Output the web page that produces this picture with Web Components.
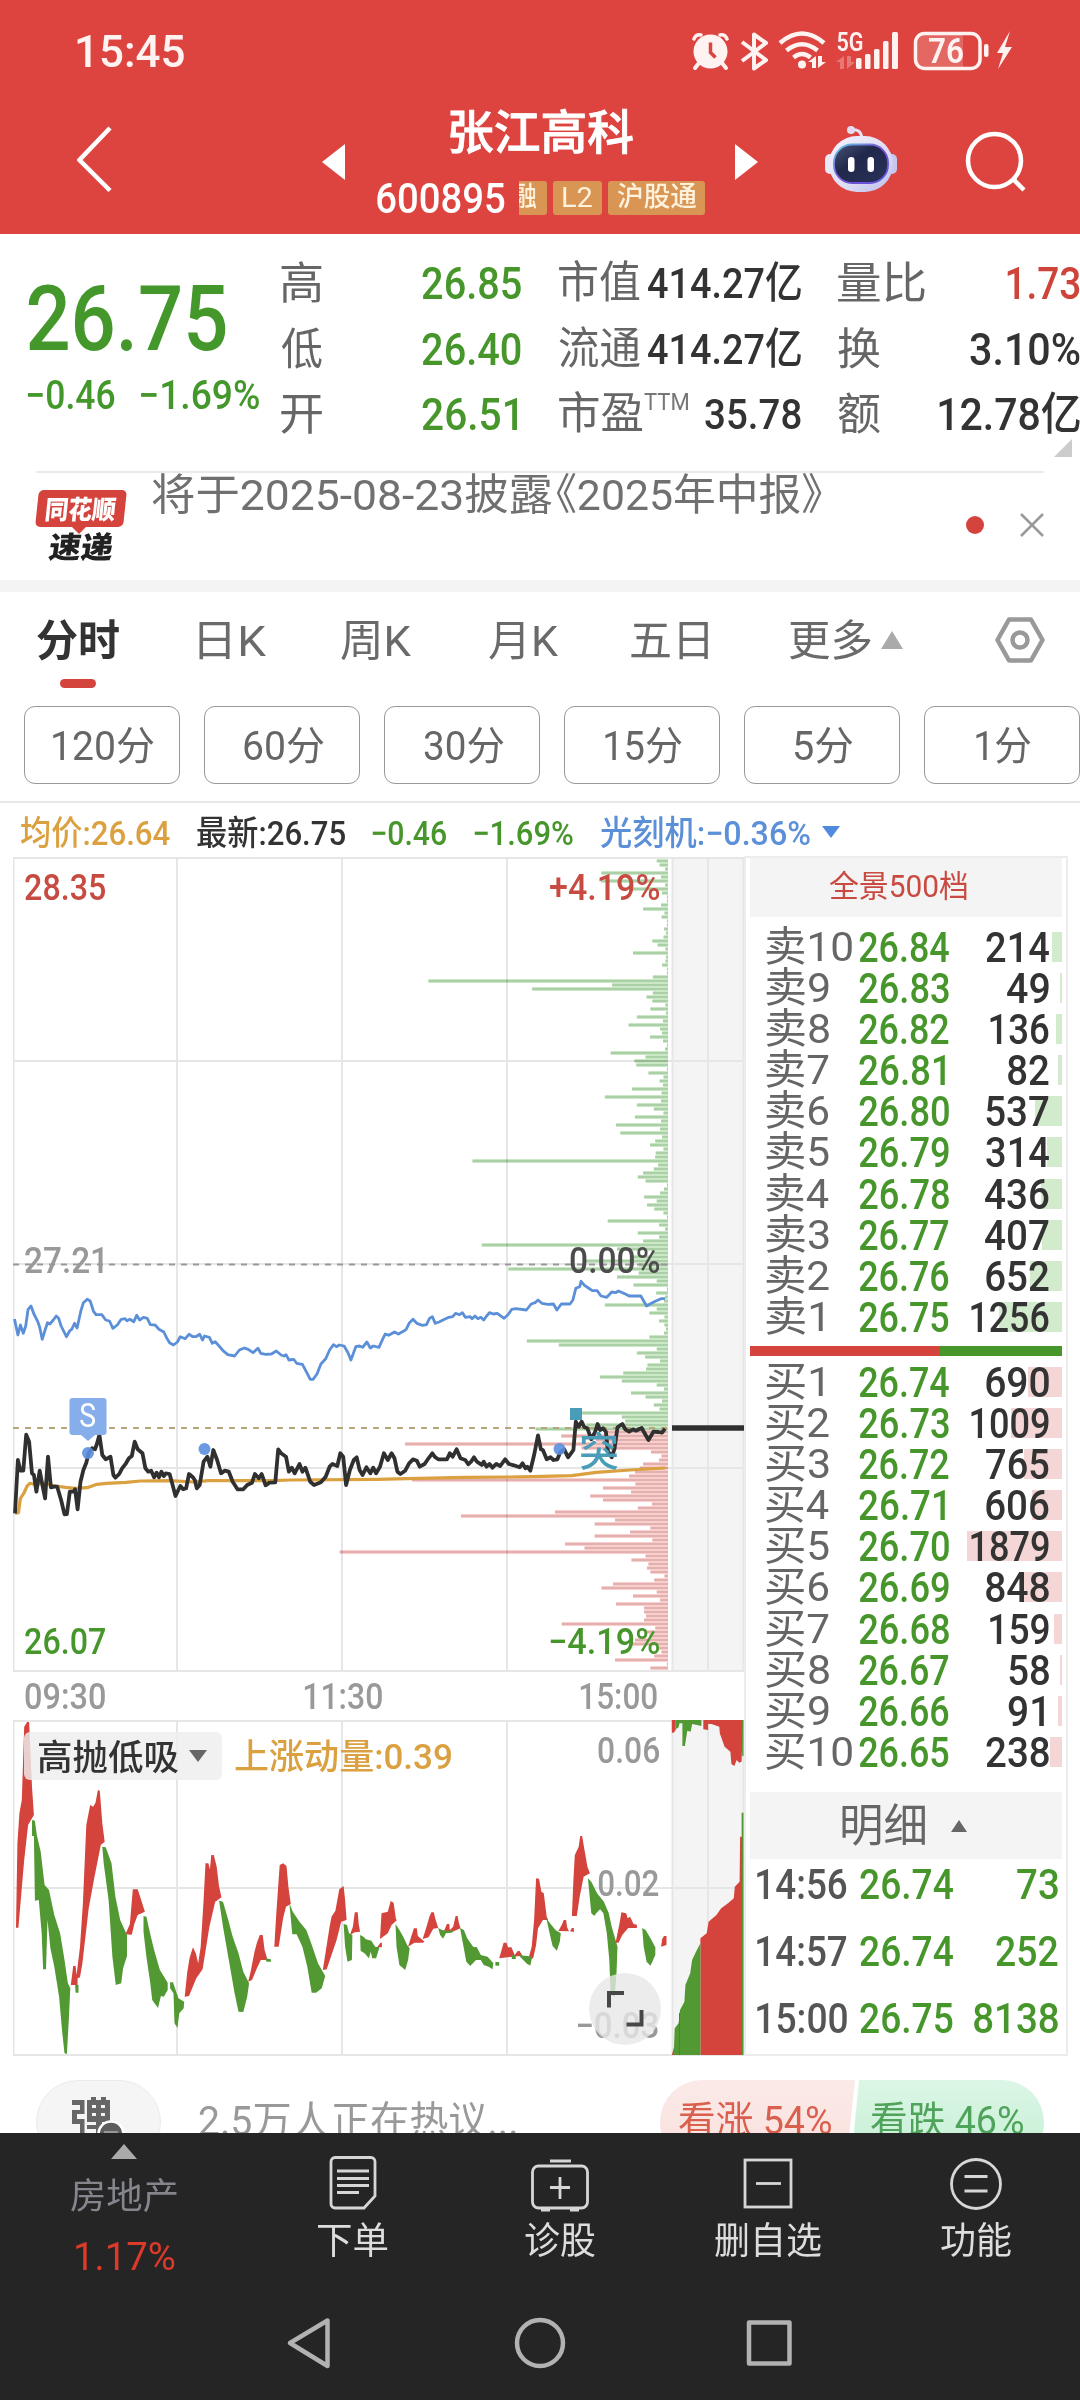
<!DOCTYPE html>
<html lang="zh-CN">
<head>
<meta charset="utf-8">
<title>张江高科 600895</title>
<style>
:root {
    --brand: #dd4440;
    --up: #d4443c;
    --down: #47962b;
    --text: #333;
    --muted: #666;
    --faint: #999;
    --gold: #dba040;
    --blue: #5b8fd8;
    --line: #e8e8e8;
    --panel: #f4f4f4;
}
body {
    margin: 0;
    width: 1080px;
    height: 2400px;
    overflow: hidden;
    background: #fff;
    color: var(--text);
    font-family: Roboto, "Noto Sans CJK SC", sans-serif;
}
</style>
</head>
<body>
<stock-app></stock-app>

<script>
const FONT = 'Roboto, "Noto Sans CJK SC", sans-serif';
const measure = document.createElement('canvas').getContext('2d');

class Component extends HTMLElement {
    constructor() {
        super();
        this.attachShadow({mode: 'open'});
    }
    connectedCallback() {
        this.shadowRoot.innerHTML = `<style>:host{display:block;box-sizing:border-box}${this.css()}</style>${this.render()}`;
        this.onMount();
    }
    css() { return '' }
    render() { return '' }
    onMount() {}
}

// one line of text squeezed so that its ink is exactly `w` wide
class FitText extends Component {
    css() {
        return `
        :host { flex: none; line-height: 1; }
        span { display: block; width: max-content; white-space: pre; transform-origin: 0 0; }`;
    }
    render() { return '<span><slot></slot></span>' }
    onMount() {
        const w = +this.getAttribute('w');
        const size = +this.getAttribute('s');
        const weight = this.getAttribute('b') || 400;
        this.style.width = w + 'px';
        this.style.height = size + 'px';
        this.style.fontSize = size + 'px';
        this.style.fontWeight = weight;
        measure.font = `${weight} ${size}px ${FONT}`;
        const m = measure.measureText(this.textContent);
        const k = w / (m.actualBoundingBoxLeft + m.actualBoundingBoxRight);
        this.shadowRoot.querySelector('span').style.transform =
            `translateX(${m.actualBoundingBoxLeft * k}px) scaleX(${k})`;
    }
}
customElements.define('fit-text', FitText);

const fit = (text, w, s, b = 400, style = '') =>
    `<fit-text w="${w}" s="${s}" b="${b}" style="${style}">${text}</fit-text>`;

class StatusBar extends Component {
    css() {
        return `
        :host { display: flex; justify-content: space-between; height: 80px; padding: 29px 68px 0 77px; color: #fff3f2; }`;
    }
    render() {
        return `${fit('15:45', 107, 45, 500)}
        <svg width="320" height="42" viewBox="692 29 320 42" fill="none" stroke="#fff3f2">
            <g stroke-width="3.5" stroke-linecap="round">
                <path d="M694 39Q696 34 701 35M720 35Q725 34 727 39"/>
                <path d="M699 63l-4 5M722 63l4 5" stroke-width="4"/>
            </g>
            <circle cx="710.500" cy="51.500" r="17" fill="#fff3f2" stroke="none"/>
            <path d="M710.500 42.500v10l5 5" stroke="#dd4440" stroke-width="3.500"/>
            <path d="M742 42l24 18-12 8.500V34.500L766 43l-24 18" stroke-width="4" stroke-linejoin="round"/>
            <g stroke-width="4.500">
                <path d="M780 43Q802 24 824 43"/>
                <path d="M786.500 50.500Q802 38 817.500 50.500"/>
                <path d="M793.500 57.500Q802 50.500 810.500 57.500"/>
            </g>
            <g fill="#fff3f2" stroke="none">
                <circle cx="802" cy="64.500" r="4"/>
                <path d="M808 62l8-6v12h-4v-6zM818 56h4v6h4l-8 6z"/>
                <rect x="856" y="58" width="5.500" height="11" rx="1.500"/>
                <rect x="865" y="54" width="5.500" height="15" rx="1.500"/>
                <rect x="874" y="49" width="5.500" height="20" rx="1.500"/>
                <rect x="883" y="41" width="5.500" height="28" rx="1.500"/>
                <rect x="892" y="32" width="6" height="37" rx="1.500"/>
                <path opacity=".3" d="M836 62l8-6v13h-4v-7zM847 56h4v6h4l-8 7z"/>
                <path d="M1010 31l-13 22h6l-5 16 14-22h-7z"/>
                <rect x="984" y="44" width="4.500" height="13" rx="2"/>
                <path d="M917 35h46v32h-46z" opacity=".2"/>
                <text x="836.500" y="50.500" font-size="25.500" font-weight="600" textLength="27" lengthAdjust="spacingAndGlyphs">5G</text>
                <text x="928" y="63" font-size="35" font-weight="600" textLength="36" lengthAdjust="spacingAndGlyphs">76</text>
            </g>
            <rect x="915.500" y="33.500" width="64.500" height="35" rx="9" stroke-width="3.500"/>
        </svg>`;
    }
}
customElements.define('status-bar', StatusBar);

class TitleBar extends Component {
    css() {
        return `
        :host { display: flex; align-items: flex-start; height: 154px; color: #fff; }
        svg { flex: none; }
        .mid { width: 328px; margin: 29px 30px 0 32px; display: flex; flex-direction: column; align-items: center; }
        .name { -webkit-text-stroke: .8px #fff; }
        .code { display: flex; margin-top: 22px; align-self: stretch; }
        .tag { box-sizing: border-box; height: 34px; margin-top: 3px; padding-top: 3px; background: #d99554; color: #fff2dc; border-radius: 3px; display: flex; justify-content: center; overflow: hidden; }`;
    }
    render() {
        return `
        <svg style="margin:45px 0 0 77px" width="38" height="68" viewBox="77 125 38 68"><path d="M110 128L79.500 160 110 190.500" fill="none" stroke="#fff" stroke-width="4.500"/></svg>
        <svg style="margin:64px 0 0 207px" width="23" height="36"><path d="M23 0v36L0 18z" fill="#fff"/></svg>
        <div class="mid">
            <div class="name">${fit('张江高科', 183, 47, 500)}</div>
            <div class="code">
                ${fit('600895', 128, 42, 500)}
                <div class="tag" style="width:28px;margin-left:14px;border-radius:0 3px 3px 0;justify-content:flex-end">${fit('融', 25, 27, 500, 'margin-right:10px')}</div>
                <div class="tag" style="width:49px;margin-left:6px">${fit('L2', 29, 28)}</div>
                <div class="tag" style="width:97px;margin-left:6px">${fit('沪股通', 80, 27, 500)}</div>
            </div>
        </div>
        <svg style="margin-top:64px" width="23" height="36"><path d="M0 0v36l23-18z" fill="#fff"/></svg>
        <svg style="margin:44px 0 0 65px" width="76" height="70" viewBox="823 124 76 70">
            <defs>
                <linearGradient id="head" x1="0" y1="0" x2="1" y2="1"><stop offset="0" stop-color="#f6f3fd"/><stop offset=".6" stop-color="#dcdcf4"/><stop offset="1" stop-color="#b9bbea"/></linearGradient>
                <linearGradient id="rim" x1="0" y1="0" x2="1" y2="1"><stop offset="0" stop-color="#63cfe4"/><stop offset=".5" stop-color="#7a4fd6"/><stop offset="1" stop-color="#5a55d8"/></linearGradient>
                <linearGradient id="face" x1="0" y1="0" x2="1" y2="1"><stop offset="0" stop-color="#4a5276"/><stop offset=".4" stop-color="#20284c"/><stop offset="1" stop-color="#2a3157"/></linearGradient>
            </defs>
            <path d="M851 130q10-2 11 9" fill="none" stroke="#e9e2f4" stroke-width="3"/>
            <circle cx="851" cy="130" r="4" fill="#e4dcf2"/>
            <rect x="825" y="154" width="10" height="20" rx="5" fill="#e9e8f8"/>
            <rect x="887" y="154" width="10" height="20" rx="5" fill="#c6c7ee"/>
            <rect x="829" y="136" width="64" height="56" rx="28" fill="url(#head)"/>
            <rect x="834" y="144.500" width="54" height="38.500" rx="18" fill="url(#face)" stroke="url(#rim)" stroke-width="1.800"/>
            <rect x="848" y="157" width="6.500" height="15" rx="3.200" fill="#fff"/>
            <rect x="867.500" y="157" width="6.500" height="15" rx="3.200" fill="#fff"/>
        </svg>
        <svg style="margin:50px 0 0 65px" width="64" height="64" viewBox="964 130 64 64" fill="none" stroke="#fff" stroke-width="4.500">
            <circle cx="994.500" cy="160.500" r="26.500"/><path d="M1013 179l11 11"/>
        </svg>`;
    }
}
customElements.define('title-bar', TitleBar);

class QuotePanel extends Component {
    css() {
        return `
        :host { position: relative; height: 238px; }
        .wrap { display: flex; align-items: flex-start; padding-left: 28px; height: 237px; }
        .now { width: 232px; padding-top: 40px; color: #44982b; }
        .chg { display: flex; gap: 26px; margin-top: 11px; }
        .col { width: 242px; padding-top: 27px; }
        .row { display: flex; justify-content: space-between; align-items: baseline; height: 65.500px; }
        .row > :first-child { color: var(--muted); }
        .corner { position: absolute; right: 8px; top: 205px; }
        hr { border: 0; margin: 0 36px; height: 2px; background: #eaeaea; }`;
    }
    row(label, lw, value, vw, style = '', size = 45, extra = '') {
        return `<div class="row">${fit(label, lw, 44)}${extra}${fit(value, vw, size, 500, style)}</div>`;
    }
    render() {
        const green = 'color:#47962b';
        const tm = fit('TTM', 44, 24, 400, 'align-self:flex-start;color:#777;margin:-2px 16px 0 0');
        return `
        <div class="wrap">
            <div class="now">
                ${fit('26.75', 198, 91, 500)}
                <div class="chg">${fit('−0.46', 87, 40, 500)}${fit('−1.69%', 118, 40, 500)}</div>
            </div>
            <div class="col" style="width:240px;margin-left:21px">
                ${this.row('高', 41, '26.85', 99, green)}
                ${this.row('低', 41, '26.40', 99, green)}
                ${this.row('开', 41, '26.51', 95, green + ';margin-right:4px')}
            </div>
            <div class="col" style="margin-left:38px">
                ${this.row('市值', 81, '414.27亿', 153, '', 43)}
                ${this.row('流通', 81, '414.27亿', 153, '', 43)}
                ${this.row('市盈', 84, '35.78', 96, '', 43, tm)}
            </div>
            <div class="col" style="margin-left:37px">
                ${this.row('量比', 87, '1.73', 73, 'color:#ce4438')}
                ${this.row('换', 42, '3.10%', 110)}
                ${this.row('额', 42, '12.78亿', 141)}
            </div>
        </div>
        <svg class="corner" width="18" height="18"><path d="M18 0v18H0z" fill="#ccc"/></svg>
        <hr>`;
    }
}
customElements.define('quote-panel', QuotePanel);

class NewsLine extends Component {
    css() {
        return `
        :host { display: flex; align-items: flex-start; height: 120px; border-bottom: 12px solid var(--panel); padding-left: 36px; color: #707070; }
        .logo { width: 90px; margin-top: 18px; display: flex; flex-direction: column; align-items: center; }
        .red { width: 88px; height: 37px; background: var(--up); border-radius: 5px; transform: skewX(-6deg); color: #fff; display: flex; justify-content: center; }
        .tip { border: 7px solid transparent; border-top-color: var(--up); border-bottom: 0; margin-left: -4px; }
        .sub { transform: skewX(-8deg); color: #222; }`;
    }
    render() {
        return `
        <div class="logo">
            <div class="red">${fit('同花顺', 70, 26, 900, 'margin-top:7px')}</div>
            <div class="tip"></div>
            <div class="sub">${fit('速递', 64, 30, 900, 'margin-top:-1px')}</div>
        </div>
        ${fit('将于2025-08-23披露', 400, 43, 400, 'margin:2px 0 0 26px')}
        ${fit('《2025年中报》', 266, 43, 400, 'margin:2px 0 0 4px')}
        <svg style="margin:40px 0 0 144px" width="80" height="26" viewBox="966 513 80 26">
            <circle cx="975" cy="526" r="9" fill="#d4443c"/>
            <path d="M1021 515l22 22m0-22l-22 22" stroke="#999" stroke-width="2.500"/>
        </svg>`;
    }
}
customElements.define('news-line', NewsLine);

class PeriodTabs extends Component {
    css() {
        return `
        :host { height: 211px; border-bottom: 2px solid var(--line); }
        .tabs { display: flex; align-items: flex-start; height: 114px; color: #6a6a6a; }
        .tab { display: flex; flex-direction: column; align-items: center; padding-top: 28px; }
        .on { color: var(--text); }
        .on::after { content: ''; width: 36px; height: 9px; border-radius: 5px; background: var(--up); margin-top: 16px; }
        .mins { display: grid; grid-template-columns: repeat(6, 156px); gap: 24px; padding-left: 24px; color: var(--muted); }
        .mins div { box-sizing: border-box; height: 78px; border: 1.500px solid #999; border-radius: 11px; display: flex; justify-content: center; padding: 20px 0 0 3px; }`;
    }
    render() {
        const tabs = [['日K', 67, 80], ['周K', 70, 75], ['月K', 69, 78], ['五日', 77, 73], ['更多', 81, 82]];
        const mins = [['120分', 101], ['60分', 80], ['30分', 80], ['15分', 77], ['5分', 58], ['1分', 55]];
        return `
        <div class="tabs">
            <div class="tab on" style="margin-left:37px">${fit('分时', 82, 43, 700)}</div>
            ${tabs.map(([t, w, m]) => `<div class="tab" style="margin-left:${m}px">${fit(t, w, 43)}</div>`).join('')}
            <svg style="margin:39px 0 0 10px" width="22" height="18"><path d="M11 0l11 18H0z" fill="#aaa"/></svg>
            <svg style="margin:23px 0 0 91px" width="52" height="50" viewBox="994 615 52 50" fill="none" stroke="#999" stroke-width="4.500" stroke-linejoin="round">
                <path d="M1009 619.500h22l11.500 20.500-11.500 20.500h-22L997.500 640z"/><circle cx="1020" cy="640" r="7.500"/>
            </svg>
        </div>
        <div class="mins">${mins.map(([t, w]) => `<div>${fit(t, w, 40)}</div>`).join('')}</div>`;
    }
}
customElements.define('period-tabs', PeriodTabs);

class LegendRow extends Component {
    css() { return ':host { display: flex; height: 54px; padding: 12.500px 0 0 21px; }' }
    render() {
        return `
        ${fit('均价:26.64', 149, 34, 500, 'color:#dba040')}
        ${fit('最新:26.75', 148, 34, 500, 'margin-left:27px')}
        ${fit('−0.46', 74, 34, 500, 'margin-left:27px;color:#47962b')}
        ${fit('−1.69%', 99, 34, 500, 'margin-left:28px;color:#47962b')}
        ${fit('光刻机:−0.36%', 210, 34, 500, 'margin-left:27px;color:#5b8fd8')}
        <svg style="margin:10px 0 0 12px" width="18" height="12"><path d="M0 0h18L9 12z" fill="#4f8ae0"/></svg>`;
    }
}
customElements.define('legend-row', LegendRow);

// chart data is kept on a 1568-unit wide canvas, 3 units per pixel down
const SX = 760 / 1568;
const toPoints = (data, top) => data.trim().split(/\s+/)
    .map(p => p.split(','))
    .map(([x, y]) => `${(x * SX).toFixed(1)},${(y / 3 + top).toFixed(1)}`).join(' ');
const gridX = [13.5, 177, 342, 507];

const SELL = `1355 1361 1372 1241 1364 1240 1372 1298 1366 1376 1376 1364 1327 1371 1365 1376 1376 1370 1374 1369 1346 1357 1373
1306 1374 1373 1366 1376 1376 1347 884 1263 1098 1347 1334 1346 1373 1342 1374 1314 1368 1297 1362 1366 1341 1368 1376 1372
1260 1332 1309 1313 1376 1338 1369 1361 1368 1304 1365 1248 1364 1314 1349 1369 1310 1364 1271 1362 1280 1366 1352 1341 1369
1353 1352 975 1358 1349 1327 1316 1332 1376 1370 1362 1329 1355 1335 1350 1369 1376 1254 1360 1372 1316 1360 1327 994 1273
1345 1305 1208 1318 1049 1318 1273 1355 1307 1376 1354 1372 1370 1248 1355 1340 1371 1360 1371 1374 1370 1340 1087 1153 1355
1314 1331 1362 1336 1333 1286 1238 1283 1355 1370 1302 1332 1366 1349 1361 1200 1283 1290 1210 1105`;
const BUY = `1248 1158 1230 836 1200 1343 1365 1360 1327 1320 1310 1298 850 1311 1244 1302 1218 1244 1345 1316 1145 951 1269
1227 1342 1300 1227 1346 1166 1206 701 1332 1303 1338 1335 1342 1371 1350 1265 1241 1355 1306 1362 1271 1329 1329 1333 1329
1159 1352 1330 1340 1310 1300 1360 1365 1350 1269 1376 1342`;
const SECTOR = `30,237 37,285 42,255 48,280 53,258 58,208 64,198 70,222 78,245 82,262 87,298 93,270 98,248 103,252 110,240
116,228 121,235 126,258 137,290 144,272 148,268 154,250 159,264 167,212 172,188 180,178 186,183 193,214 198,224 210,224
218,240 226,243 233,265 242,255 250,238 258,236 262,242 268,238 276,245 282,226 288,240 296,232 304,235 310,254 320,255
328,268 338,276 344,294 350,308 358,315 366,306 372,290 382,296 390,283 398,290 404,290 412,283 418,300 422,288 432,292
438,310 444,305 452,318 460,332 470,344 484,348 494,330 504,324 512,328 522,338 532,325 538,340 548,343 560,342 570,333
580,345 586,348 590,344 596,360 606,358 612,370 624,373 632,395 640,418 646,418 654,402 662,372 672,356 680,330 688,314
694,320 700,315 710,318 718,338 724,360 734,320 742,318 748,322 757,306 764,324 770,318 782,322 790,296 795,282 802,286
814,276 822,282 832,274 838,268 844,250 852,238 860,250 872,256 880,254 886,236 892,230 898,250 906,246 914,240 926,232
934,230 940,220 948,224 954,218 960,232 970,230 974,236 980,228 986,236 992,232 998,240 1004,228 1010,218 1018,222
1026,220 1040,235 1048,224 1056,208 1064,206 1086,210 1096,192 1104,188 1110,180 1118,190 1130,193 1142,192 1149,210
1158,192 1164,192 1176,192 1182,180 1188,145 1196,140 1199,124 1206,136 1214,144 1222,152 1232,152 1240,168 1252,172
1262,156 1270,158 1276,153 1290,162 1298,168 1310,168 1322,168 1334,198 1344,190 1352,184 1364,176 1372,176`;
const PRICE = `31,820 37,660 42,692 48,692 54,584 60,605 66,700 70,705 75,755 82,692 88,740 93,775 99,650 105,742 112,740
118,740 126,780 133,823 138,822 144,755 152,755 155,748 160,808 166,725 172,690 178,668 183,640 190,625 196,628 200,612
205,584 211,645 218,658 228,650 234,705 238,713 246,702 252,685 260,670 266,655 272,648 278,605 284,628 294,640 300,685
306,695 312,692 318,712 323,698 328,712 333,695 338,708 342,700 350,702 356,735 362,768 372,738 378,748 384,745 390,702
398,712 402,720 406,745 412,735 420,665 428,650 434,680 440,630 448,660 456,700 464,692 472,695 480,725 490,748 502,748
510,735 520,728 526,702 534,715 540,702 548,736 556,728 568,727 574,628 580,640 590,650 596,695 602,683 608,700 618,672
624,695 630,683 640,725 648,735 662,727 672,710 680,680 686,672 696,678 702,640 708,650 714,735 722,690 730,660 736,652
742,690 748,705 756,682 764,700 770,683 776,700 784,680 792,640 800,660 808,640 814,655 820,695 826,702 836,692 844,670
852,658 860,662 866,680 876,672 884,655 892,640 898,652 904,658 912,658 922,658 928,640 934,650 942,628 950,655 960,660
966,673 972,665 978,652 984,665 994,675 998,665 1004,680 1010,672 1016,683 1024,672 1032,678 1042,658 1050,672 1060,676
1072,682 1078,670 1084,685 1088,680 1094,692 1102,645 1110,586 1116,628 1120,630 1128,658 1136,652 1142,660 1150,658
1156,636 1164,628 1172,652 1178,640 1183,630 1188,545 1194,560 1200,545 1206,562 1212,565 1220,598 1228,575 1233,552
1238,570 1244,565 1250,575 1254,632 1262,652 1268,625 1274,562 1284,552 1290,568 1298,575 1306,568 1312,572 1324,564
1332,585 1338,600 1348,575 1358,576 1366,578 1372,566`;
const AVERAGE = `31,820 38,818 42,775 50,758 56,738 62,730 70,733 90,730 115,738 135,742 155,745 180,743 200,733 220,730
260,727 290,723 350,722 400,726 430,722 560,722 600,720 780,718 840,716 960,712 1050,711 1100,710 1180,707 1230,697
1300,690 1372,684`;

class ChartBase extends Component {
    css() {
        return `
        :host { position: relative; width: 731px; height: ${this.h}px; }
        svg { display: block; }
        fit-text { position: absolute; }`;
    }
    // label over the plot, placed by its baseline in page coordinates
    label(text, x, base, w, color, size = 36, weight = 500) {
        const top = base - size * .842 - this.top;
        return fit(text, w, size, weight, `left:${x - 13}px;top:${top.toFixed(1)}px;color:${color}`);
    }
    grid(rows) {
        const b = this.top + this.h;
        return `<rect x="672" y="${this.top}" width="72" height="${this.h}" fill="#f4f4f4"/>
        <path d="${[...gridX, 672.5, 708, 743.5].map(x => `M${x} ${this.top}V${b}`).join('')}
        ${rows.map(y => `M13 ${y}H744`).join('')}" stroke="#e6e6e6" stroke-width="2" fill="none"/>`;
    }
}

class IntradayChart extends ChartBase {
    top = 857;
    h = 815;
    depth(data, top, dark, light) {
        return data.trim().split(/\s+/).map((v, i) => {
            const x = v * SX;
            const y = top + i * 4;
            return `<rect x="${x}" y="${y - 2}" width="${668 - x}" height="4" fill="${light}"/>
            <rect x="${x}" y="${y - 1}" width="${668 - x}" height="2" fill="${dark}"/>`;
        }).join('');
    }
    render() {
        return `
        <svg width="731" height="815" viewBox="13 857 731 815">
            ${this.grid([858, 1061, 1264, 1468, 1671])}
            <g style="mix-blend-mode:multiply">
            ${this.depth(SELL, 861, '#abcfa6', '#cbe8c6')}
            ${this.depth(BUY, 1432, '#e2b0af', '#f9cfce')}
            </g>
            <path d="M13 1264.500H668" stroke="#999" stroke-width="1.800" stroke-dasharray="6 6"/>
            <path d="M13 1428H668" stroke="#b5a67c" stroke-width="1.800" stroke-dasharray="6 6"/>
            <g fill="none" stroke-linejoin="round">
                <polyline points="${toPoints(AVERAGE, 1240)}" stroke="#dba040" stroke-width="3.200"/>
                <polyline points="${toPoints(SECTOR, 1240)}" stroke="#5b8fd8" stroke-width="2.800"/>
                <polyline points="${toPoints(PRICE, 1240)}" stroke="#303030" stroke-width="3.800"/>
            </g>
            <path d="M672 1428H744" stroke="#303030" stroke-width="5.500"/>
            <rect x="69.500" y="1398" width="37" height="37" rx="3" fill="#86aeea"/>
            <path d="M81 1435h14l-7 6z" fill="#86aeea"/>
            <g fill="#5b8fe0" fill-opacity=".9">
                <circle cx="88" cy="1453" r="6"/><circle cx="204.500" cy="1449" r="6"/><circle cx="559.500" cy="1449" r="6"/>
            </g>
            <rect x="570" y="1408" width="12" height="12" fill="#4a9db8"/>
        </svg>
        ${this.label('S', 80, 1427, 15, '#fff', 34, 400)}
        ${this.label('突', 580, 1467, 38, '#4a9db8', 40)}
        ${this.label('28.35', 25, 900, 80, '#c74b40')}
        ${this.label('+4.19%', 550, 900, 109, '#c74b40')}
        ${this.label('27.21', 25, 1273, 78, '#999')}
        ${this.label('0.00%', 570, 1273, 89, '#4c4c4c')}
        ${this.label('26.07', 25, 1654, 80, '#47962b')}
        ${this.label('−4.19%', 550, 1654, 109, '#47962b')}`;
    }
}
customElements.define('intraday-chart', IntradayChart);

const RISE = [
    '33,683 36,430 40,340 45,300 50,80 56,66 60,66 66,260 70,345 58,375 50,480 38,683',
    '146,855 151,798 156,798 158,825 165,740 171,610 178,375 186,315 192,320 197,308 202,270 206,272 211,370 216,425 208,435 195,530 183,625 170,790 165,832 160,835 160,855',
    '259,703 268,672 274,568 284,568 292,603 299,635 284,645 277,672 272,704',
    '381,890 386,820 391,775 398,742 404,760 409,790 414,740 420,600 424,490 430,490 433,508 436,465 441,465 447,500 452,560 457,592 444,605 432,680 418,808 405,835 390,888',
    '512,845 517,815 525,755 530,728 536,705 542,705 546,750 552,780 538,780 530,805 520,840',
    '566,740 570,640 577,495 584,490 591,498 595,560 600,612 590,620 584,655 575,740',
    '666,810 672,755 680,680 684,650 692,632 700,568 709,558 712,600 715,660 704,665 694,722 684,765 674,808',
    '722,705 728,680 732,637 738,637 740,672 743,695 732,697',
    '784,717 787,640 800,635 806,603 812,608 817,658 819,660 808,675 800,700',
    '778,742 785,728 788,728 788,742',
    '842,740 848,712 854,685 860,685 862,708 876,725 872,728 855,728',
    '872,717 880,680 886,650 890,637 895,637 899,660 904,684 894,686 884,712',
    '915,697 922,672 927,672 928,690 935,680 940,648 944,648 947,670 950,685 936,694',
    '1030,775 1036,745 1039,728 1045,728 1048,742 1055,742 1062,765 1068,753 1072,753 1078,767 1072,768',
    '1090,777 1097,740 1102,660 1106,535 1112,536 1117,575 1122,580 1128,650 1131,660 1120,660 1110,685 1106,735 1100,775',
    '1152,693 1160,672 1163,660 1168,660 1170,682 1174,694', '1176,694 1180,684 1184,684 1184,696',
    '1180,648 1183,540 1186,465 1194,440 1197,408 1201,408 1206,450 1212,500 1217,520 1204,530 1196,590 1190,648',
    '1270,728 1278,672 1282,637 1292,640 1295,655 1300,650 1307,672 1314,674 1314,684 1296,684 1284,705 1276,728',
    '1364,740 1366,718 1370,708 1375,708 1375,735',
    '1386,60 1394,60 1394,90 1390,98 1386,98', '1451,60 1461,60 1461,90 1451,88',
    '1461,60 1533,60 1530,185 1525,188 1520,180 1515,198 1509,192 1507,155 1495,140 1485,100 1484,80 1468,72 1461,72',
    '1386,1065 1391,1040 1391,1065',
    '1445,1065 1445,715 1458,700 1462,665 1478,645 1488,625 1502,610 1514,595 1516,560 1526,545 1527,410 1531,410 1531,1065'
];
const FALL = [
    '66,360 72,362 76,405 84,455 92,555 101,570 112,645 124,700 132,770 140,850 145,865 142,960 138,1062 133,1060 128,990 122,890 112,800 104,745 98,660 95,808 89,808 86,700 80,600 72,602 70,408 66,408',
    '155,855 162,855 162,878 156,878',
    '211,440 218,442 230,490 238,590 248,660 262,705 262,768 254,805 250,850 239,855 232,770 224,600 214,490',
    '296,648 302,650 308,690 318,750 330,810 346,848 346,870 338,890 332,888 326,924 314,900 310,850 302,770 296,695',
    '351,847 357,847 368,895 380,905 379,925 370,940 366,984 360,970 358,880 351,865',
    '452,602 460,605 470,655 480,710 492,760 502,815 514,850 510,890 502,936 492,935 484,880 472,780 460,680',
    '547,775 559,778 559,785 550,785',
    '597,610 604,635 618,665 632,690 642,730 656,790 671,828 664,865 652,878 643,878 634,800 624,740 612,703 603,703',
    '709,672 716,675 720,700 727,705 726,780 717,785 712,740',
    '743,705 750,710 755,718 766,722 774,740 783,742 776,775 768,775 765,755 761,775 752,760 744,752',
    '816,672 824,690 832,710 840,735 845,745 842,780 836,810 824,795 818,740',
    '904,684 912,690 922,692 936,692 932,698 920,700 914,716 908,705',
    '949,684 957,690 964,715 976,740 984,742 992,765 1006,770 1018,790 1016,808 1008,800 998,795 992,780 982,780 970,798 962,785 955,730',
    '1022,786 1030,786 1030,797 1022,797', '1056,765 1064,765 1064,777 1056,777',
    '1070,766 1088,768 1098,770 1094,797 1086,790 1076,775',
    '1127,655 1136,672 1146,690 1157,700 1155,725 1149,752 1140,738 1134,700',
    '1213,535 1220,545 1232,580 1246,605 1256,640 1262,680 1274,740 1272,820 1268,890 1260,885 1257,780 1252,700 1245,640 1238,628 1230,640 1226,648 1220,640',
    '1325,684 1332,690 1342,715 1352,742 1352,765 1342,797 1334,785 1328,740',
    '1394,60 1447,60 1447,78 1438,75 1428,72 1425,95 1418,92 1413,138 1408,138 1408,70 1402,70 1400,82 1394,88',
    '1390,1065 1392,985 1400,970 1403,930 1412,905 1414,855 1424,820 1428,780 1436,755 1445,730 1445,1065',
    '1530,338 1534,338 1534,1065 1530,1065', '1531,60 1534,60 1534,168 1531,168'
];

class MomentumChart extends ChartBase {
    top = 1720;
    h = 336;
    css() {
        return super.css() + `
        .chip { position: absolute; left: 11px; top: 12px; width: 198px; height: 48px; border-radius: 6px; background: rgba(238,238,238,.82); }
        .zoom { position: absolute; left: 575px; top: 252px; }
        .chip svg { position: absolute; left: 165px; top: 18px; }`;
    }
    render() {
        const shapes = (list, color) => list.map(p => `<polygon points="${toPoints(p, 1700)}" fill="${color}"/>`).join('');
        return `
        <svg width="731" height="336" viewBox="13 1720 731 336">
            ${this.grid([1721, 1888, 2055])}
            ${shapes(RISE, '#d4443c')}
            ${shapes(FALL, '#529934')}
            <path d="M679.500 2013V2055" stroke="#b0502e"/>
        </svg>
        <div class="chip"><svg width="18" height="12"><path d="M0 0h18L9 12z" fill="#666"/></svg></div>
        ${this.label('高抛低吸', 38, 1770, 140, '#333', 35)}
        ${this.label('上涨动量:0.39', 235, 1769, 216, '#dba040', 35)}
        ${this.label('0.06', 598, 1763, 61, '#999')}
        ${this.label('0.02', 598, 1896, 61, '#999')}
        ${this.label('−0.03', 577, 2038, 81, '#999')}
        <svg class="zoom" width="74" height="74" viewBox="588 1972 74 74">
            <circle cx="625" cy="2009" r="36" fill="#e7e7e7" fill-opacity=".8"/>
            <path d="M609 2007.500V1993h15M641.500 2010V2024.500h-15" fill="none" stroke="#484848" stroke-width="4"/>
        </svg>`;
    }
}
customElements.define('momentum-chart', MomentumChart);

class TimeAxis extends Component {
    css() { return ':host { display: flex; height: 48px; padding: 7px 0 0 12px; color: #999; }' }
    render() {
        return `${fit('09:30', 80, 36, 500)}${fit('11:30', 78, 36, 500, 'margin-left:199px')}${fit('15:00', 77, 36, 500, 'margin-left:198px')}`;
    }
}
customElements.define('time-axis', TimeAxis);

class OrderBook extends Component {
    css() {
        return `
        :host { width: 324px; height: 1200px; border: 2px solid #ececec; padding: 0 4px; margin-top: -1px; }
        .head { height: 59px; background: var(--panel); display: flex; justify-content: center; color: #c94a40; padding: 13px 16px 0 0; box-sizing: border-box; }
        .lv { box-sizing: border-box; display: grid; grid-template-columns: 93px 97px 1fr; height: 41.100px; padding-left: 16px; }
        .lv > :first-child { color: var(--muted); }
        .lv > :nth-child(2) { color: var(--down); }
        .vol { display: flex; justify-content: flex-end; padding-right: 13px; background: linear-gradient(var(--c), var(--c)) right 5px / var(--bar) 30px no-repeat; }
        .ratio { height: 10px; background: linear-gradient(90deg, var(--up) 61%, var(--down) 61%); }
        .more { box-sizing: border-box; height: 67px; background: var(--panel); display: flex; margin-top: 18px; padding: 12px 0 0 92px; color: var(--muted); }
        .deal { display: flex; height: 67px; padding: 5px 4px 0 7px; box-sizing: border-box; color: #555; }
        .deal > :nth-child(n+2) { color: var(--down); }
        .deal > :last-child { margin-left: auto; }`;
    }
    levels(side, rows, color) {
        return rows.map(([n, price, vol, w, bar]) => `
        <div class="lv">
            ${fit(side + n, n === 10 ? 86 : n === 1 ? 57 : 63, 41)}
            ${fit(price, price.endsWith('1') ? 86 : 90, 42, 500)}
            <div class="vol" style="--c:${color};--bar:${bar}px">${fit(vol, w, 42, 500, vol.endsWith('1') ? 'margin-right:5px' : '')}</div>
        </div>`).join('');
    }
    render() {
        const sell = [
            [10, '26.84', '214', 63, 10], [9, '26.83', '49', 42, 2], [8, '26.82', '136', 59, 6], [7, '26.81', '82', 41, 4],
            [6, '26.80', '537', 63, 27], [5, '26.79', '314', 63, 15], [4, '26.78', '436', 64, 21], [3, '26.77', '407', 64, 20],
            [2, '26.76', '652', 63, 32], [1, '26.75', '1256', 78, 63]
        ];
        const buy = [
            [1, '26.74', '690', 63, 34], [2, '26.73', '1009', 78, 51], [3, '26.72', '765', 63, 38], [4, '26.71', '606', 63, 30],
            [5, '26.70', '1879', 78, 95], [6, '26.69', '848', 63, 38], [7, '26.68', '159', 59, 8], [8, '26.67', '58', 40, 2],
            [9, '26.66', '91', 36, 4], [10, '26.65', '238', 63, 12]
        ];
        const deals = [['14:56', '26.74', '73', 41], ['14:57', '26.74', '252', 62], ['15:00', '26.75', '8138', 84]];
        return `
        <div class="head">${fit('全景500档', 138, 31)}</div>
        <div style="padding-top:10px;height:419px">${this.levels('卖', sell, '#d2ebcd')}</div>
        <div class="ratio"></div>
        <div style="padding-top:6px;height:412px">${this.levels('买', buy, '#f3d6d5')}</div>
        <div class="more">${fit('明细', 83, 45)}<svg style="margin:16px 0 0 26px" width="16" height="12"><path d="M8 0l8 12H0z" fill="#666"/></svg></div>
        ${deals.map(([t, p, v, w]) => `<div class="deal">${fit(t, 90, 42, 500)}${fit(p, 93, 42, 500, 'margin-left:13px')}${fit(v, w, 42, 500)}</div>`).join('')}`;
    }
}
customElements.define('order-book', OrderBook);

class TalkBar extends Component {
    css() {
        return `
        :host { display: flex; align-items: flex-start; height: 77px; padding: 24px 36px 0; overflow: hidden; color: #999; }
        .pill { flex: none; box-sizing: border-box; width: 125px; height: 84px; border: 1px solid #ebebeb; border-radius: 42px; background: #f5f5f5; padding: 16px 0 0 34px; }
        .vote { margin-left: auto; display: flex; width: 384px; height: 84px; border-radius: 42px; overflow: hidden; }
        .vote div { padding-top: 22px; height: 84px; box-sizing: border-box; }
        .bull { width: 197px; padding-left: 19px; color: #d9604f; background: linear-gradient(#faeae8, #fbe0dc); clip-path: polygon(0 0, 195px 0, 186px 100%, 0 100%); }
        .bear { width: 193px; margin-left: -6px; padding-left: 20px; color: #4fa35a; background: linear-gradient(#dcf6e6, #c3efd2); clip-path: polygon(8px 0, 100% 0, 100% 100%, 0 100%); }`;
    }
    render() {
        return `
        <div class="pill">
            <svg width="60" height="60" viewBox="71 2097 60 60">
                <path fill="#666" fill-rule="evenodd" d="M72 2100h12.500v14H77v5h7.500v16H80v-11h-8v-14h8v-5h-8zM91 2097h5v3h5v-3h5v3h4v22h-8v14h-6v-14h-9v-22h4zM92 2105v3h4v-3zM101 2105v3h4v-3zM92 2113v3h4v-3zM101 2113v3h4v-3z"/>
                <path fill="#666" d="M87 2125h23v4H87z"/>
                <circle cx="111" cy="2134" r="12.500" fill="#5e5e5e" stroke="#fff" stroke-width="2.500"/>
                <path d="M104 2132h14" stroke="#aaa" stroke-width="1.500"/>
            </svg>
        </div>
        ${fit('2.5万人正在热议...', 317, 40, 400, 'margin:22px 0 0 38px')}
        <div class="vote">
            <div class="bull">${fit('看涨 54%', 152, 39)}</div>
            <div class="bear">${fit('看跌 46%', 152, 39)}</div>
        </div>`;
    }
}
customElements.define('talk-bar', TalkBar);

class ActionBar extends Component {
    css() {
        return `
        :host { height: 267px; background: #252525; color: #ddd; }
        .acts { display: flex; height: 170px; align-items: flex-start; }
        .act { width: 208px; height: 170px; display: flex; flex-direction: column; align-items: center; }
        .act svg { margin: 20px 0 10px; }
        .sector { width: 249px; display: flex; flex-direction: column; align-items: center; color: #85868d; }
        .keys { display: flex; }`;
    }
    render() {
        const icons = {
            order: '<path d="M9 4.500h36a4 4 0 0 1 4 4V43l-11 12H9a4 4 0 0 1-4-4V8.500a4 4 0 0 1 4-4z"/><path d="M11 18h32M11 25.500h32M11 32.500h32M11 39.500h22"/>',
            check: '<rect x="-.5" y="13" width="55" height="42" rx="6"/><path d="M17 8h21M27 24v22M17 34.500h20M8 57h9M37 57h9"/>',
            remove: '<rect x="4" y="7" width="46" height="47"/><path d="M15 30.500h25"/>',
            tools: '<circle cx="27" cy="31" r="24.500"/><path d="M15.500 23.500h23M15.500 38h23"/>'
        };
        const acts = [['order', '下单', 70], ['check', '诊股', 70], ['remove', '删自选', 106], ['tools', '功能', 70]];
        return `
        <div class="acts">
            <div class="sector">
                <svg style="margin:11px 0 20px" width="26" height="15"><path d="M13 0l13 15H0z" fill="#aaa"/></svg>
                ${fit('房地产', 106, 36)}
                ${fit('1.17%', 99, 38, 400, 'color:#dc3a2a;margin:23px 0 0 2px')}
            </div>
            ${acts.map(([icon, name, w]) => `<div class="act">
                <svg width="54" height="60" viewBox="0 0 54 60" overflow="visible" fill="none" stroke="#d6d6d6" stroke-width="2.800">${icons[icon]}</svg>
                ${fit(name, w, 37)}
            </div>`).join('')}
        </div>
        <div class="keys">
            <svg style="margin:13px 0 0 285px" width="510" height="56" viewBox="285 2316 510 56" fill="none" stroke="#b2b2b2" stroke-width="4.500" stroke-linejoin="round">
                <path d="M327.500 2320.500v45.500L290 2343z"/><circle cx="540" cy="2343" r="23"/><rect x="749" y="2322.500" width="40.500" height="41"/>
            </svg>
        </div>`;
    }
}
customElements.define('action-bar', ActionBar);

class StockApp extends Component {
    css() {
        return `
        header { background: var(--brand); height: 234px; }
        .board { display: flex; padding-left: 13px; height: 1199px; }`;
    }
    render() {
        return `
        <header><status-bar></status-bar><title-bar></title-bar></header>
        <quote-panel></quote-panel>
        <news-line></news-line>
        <period-tabs></period-tabs>
        <legend-row></legend-row>
        <div class="board">
            <div>
                <intraday-chart></intraday-chart>
                <time-axis></time-axis>
                <momentum-chart></momentum-chart>
            </div>
            <order-book></order-book>
        </div>
        <talk-bar></talk-bar>
        <action-bar></action-bar>`;
    }
}
customElements.define('stock-app', StockApp);
</script>
</body>
</html>
